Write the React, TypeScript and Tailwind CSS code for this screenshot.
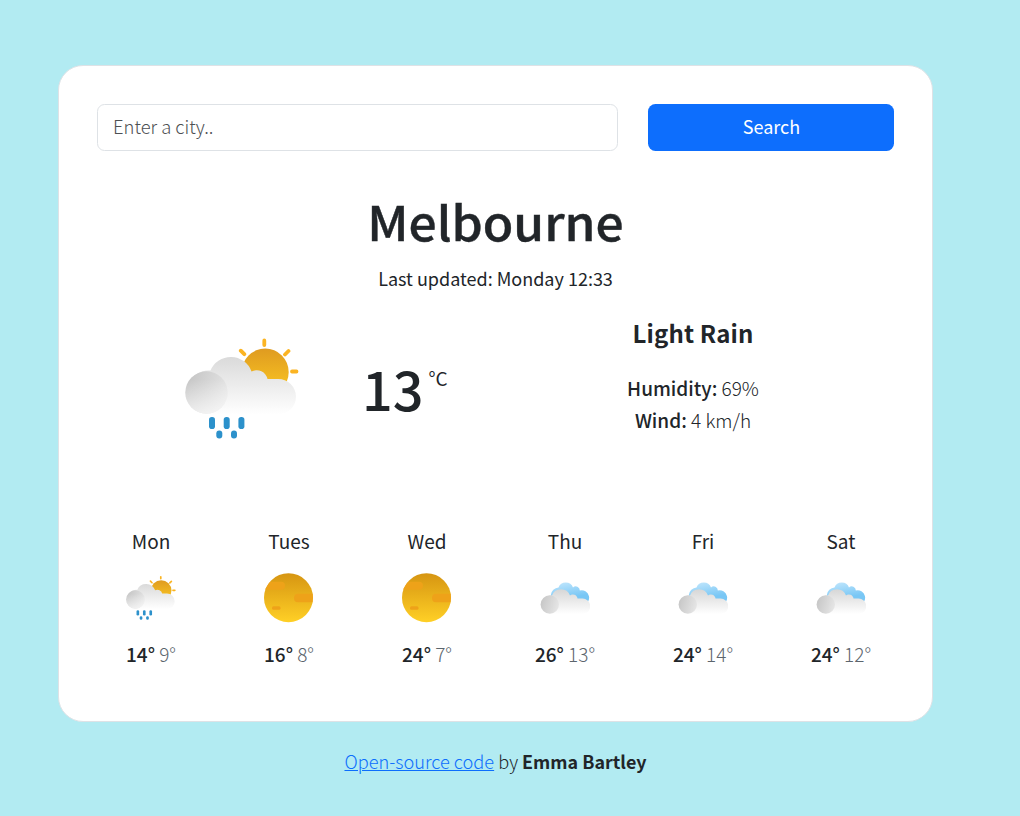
import React from "react";

function RainIcon({ className }: { className: string }) {
  return (
    <svg viewBox="-0.5 -0.5 114 114" className={className}>
      <defs>
        <linearGradient id="sun" x1="0" y1="0" x2="0" y2="1">
          <stop offset="0" stopColor="#df9b20" />
          <stop offset="1" stopColor="#fcc922" />
        </linearGradient>
        <linearGradient id="cloud" x1="0" y1="23" x2="0" y2="82" gradientUnits="userSpaceOnUse">
          <stop offset="0" stopColor="#d9d9d9" />
          <stop offset="1" stopColor="#ffffff" />
        </linearGradient>
        <linearGradient id="puff" x1="0" y1="0.2" x2="1" y2="0.6">
          <stop offset="0" stopColor="#c4c4c4" />
          <stop offset="1" stopColor="#e6e6e6" />
        </linearGradient>
        <linearGradient id="puffFade" x1="0" y1="38" x2="0" y2="82" gradientUnits="userSpaceOnUse">
          <stop offset="0.2" stopColor="#ffffff" stopOpacity="0" />
          <stop offset="1" stopColor="#ffffff" stopOpacity="0.65" />
        </linearGradient>
      </defs>
      <g stroke="#fbb422" strokeWidth="3.8" strokeLinecap="round">
        <path d="M78.800 8v4.500M55.300 18.200l3.500 3.500M103 18.500l-3.500 3.500M106.500 39h4.500" />
      </g>
      <circle cx="79.700" cy="39.500" r="23.500" fill="url(#sun)" />
      <path
        d="M21 82H93A17.500 17.500 0 0 0 92.500 46.500H82A11 11 0 0 0 66 39A22 22 0 0 0 25 38A21.500 21.500 0 0 0 21 82Z"
        fill="url(#cloud)"
      />
      <circle cx="21" cy="60" r="21.200" fill="url(#puff)" />
      <circle cx="21" cy="60" r="21.200" fill="url(#puffFade)" />
      <g fill="#2c91cb">
        <rect x="23.500" y="84.500" width="6" height="12" rx="2.800" />
        <rect x="38.200" y="84.500" width="6" height="12" rx="2.800" />
        <rect x="52.900" y="84.500" width="6" height="12" rx="2.800" />
        <rect x="30.800" y="98" width="6" height="8" rx="2.900" />
        <rect x="45.500" y="98" width="6" height="8" rx="2.900" />
      </g>
    </svg>
  );
}

function SunIcon({ className }: { className: string }) {
  return (
    <svg viewBox="0 0 50 50" className={className}>
      <defs>
        <linearGradient id="disc" x1="0" y1="0" x2="0" y2="1">
          <stop offset="0" stopColor="#d69512" />
          <stop offset="1" stopColor="#ffd026" />
        </linearGradient>
        <clipPath id="discClip">
          <circle cx="24.500" cy="24.700" r="24.500" />
        </clipPath>
      </defs>
      <circle cx="24.500" cy="24.700" r="24.500" fill="url(#disc)" />
      <g fill="#eea219" clipPath="url(#discClip)">
        <rect x="-5" y="8.700" width="26" height="8" rx="4" />
        <rect x="30" y="20.700" width="26" height="8.500" rx="4" />
        <rect x="8" y="33.200" width="8.500" height="3.500" rx="1.500" />
      </g>
    </svg>
  );
}

function CloudIcon({ className }: { className: string }) {
  return (
    <svg viewBox="-0.5 1 50 50" className={className}>
      <defs>
        <linearGradient id="sky" x1="0" y1="0" x2="0.300" y2="1">
          <stop offset="0" stopColor="#c5e8fd" />
          <stop offset="0.750" stopColor="#79c7f5" />
        </linearGradient>
        <linearGradient id="front" x1="0" y1="17" x2="0" y2="42" gradientUnits="userSpaceOnUse">
          <stop offset="0" stopColor="#d6d6d6" />
          <stop offset="1" stopColor="#ffffff" />
        </linearGradient>
        <linearGradient id="ball" x1="0" y1="0.300" x2="1" y2="0.600">
          <stop offset="0" stopColor="#c6c6c6" />
          <stop offset="1" stopColor="#e6e6e6" />
        </linearGradient>
      </defs>
      <path
        d="M16 32A8.500 8.500 0 0 1 18 15.500A7.700 7.700 0 0 1 32.500 15.500A4 4 0 0 1 39.300 18.500A7.400 7.400 0 1 1 43 33Z"
        fill="url(#sky)"
      />
      <path
        d="M9.500 42H42.500A7.600 7.600 0 0 0 41.500 26.500H37A4.700 4.700 0 0 0 29.500 23.500A9.600 9.600 0 0 0 11.500 23.500A9.200 9.200 0 0 0 9.500 42Z"
        fill="url(#front)"
      />
      <circle cx="9.300" cy="32.500" r="9.200" fill="url(#ball)" />
    </svg>
  );
}

const icons = { rain: RainIcon, sun: SunIcon, cloud: CloudIcon };

const forecast: { day: string; icon: keyof typeof icons; high: number; low: number }[] = [
  { day: "Mon", icon: "rain", high: 14, low: 9 },
  { day: "Tues", icon: "sun", high: 16, low: 8 },
  { day: "Wed", icon: "sun", high: 24, low: 7 },
  { day: "Thu", icon: "cloud", high: 26, low: 13 },
  { day: "Fri", icon: "cloud", high: 24, low: 14 },
  { day: "Sat", icon: "cloud", high: 24, low: 12 },
];

export default function App() {
  return (
    <div className="h-[816px] w-[1020px] overflow-hidden bg-[#b2ebf2] pt-[65px] pl-[58px] font-['Noto_Sans_CJK_JP',sans-serif] text-[18px] leading-[30px] font-light text-[#212529]">
      <main className="h-[657px] w-[875px] rounded-[25px] border border-[#dee2e6] bg-white px-[38px] pt-[38px]">
        <form className="flex gap-[30px]" onSubmit={(e) => e.preventDefault()}>
          <input
            type="text"
            placeholder="Enter a city.."
            className="h-[47px] w-[521px] rounded-[7.500px] border border-[#dee2e6] px-[15px] pb-[3px] text-[18.400px] placeholder:text-[#4d5053] placeholder:opacity-100"
          />
          <button className="h-[47px] w-[246px] rounded-[7.500px] bg-[#0d6efd] pb-[3px] pl-px font-normal text-white">Search</button>
        </form>
        <h1 className="mt-[40px] scale-x-[1.058] text-center text-[47px] leading-[60px] font-medium [-webkit-text-stroke:0.4px_#212529]">
          Melbourne
        </h1>
        <p className="mt-[12px] text-center font-normal">Last updated: Monday 12:33</p>
        <section className="mt-[25px] flex h-[184px]">
          <div className="flex w-[399px] pl-[88px]">
            <RainIcon className="mt-[14px] size-[114px]" />
            <div className="ml-[63px] flex pt-[34px]">
              <span className="text-[54px] leading-[72px] font-medium">13</span>
              <span className="ml-[5px] pt-[11px] text-[19px] font-normal">°C</span>
            </div>
          </div>
          <div className="w-[394px] text-center">
            <h2 className="text-[24px] leading-[30px] font-bold tracking-[0.15px]">Light Rain</h2>
            <p className="mt-[24px] text-[19px] leading-[32px]">
              <span className="font-medium">Humidity:</span> 69%
            </p>
            <p className="text-[19px] leading-[32px]">
              <span className="font-medium">Wind:</span> 4 km/h
            </p>
          </div>
        </section>
        <section className="-mr-[16px] -ml-[15px] mt-[24px] grid grid-cols-6 text-[19px]">
          {forecast.map(({ day, icon, high, low }) => {
            const Icon = icons[icon];
            return (
              <div key={day} className="flex flex-col items-center">
                <div className="font-normal">{day}</div>
                <Icon className="mt-[17px] size-[50px]" />
                <div className="mt-[16px] text-[#5c656d]">
                  <span className="font-medium text-[#212529]">{high}°</span> {low}°
                </div>
              </div>
            );
          })}
        </section>
      </main>
      <footer className="mt-[24px] w-[875px] text-center text-[18.200px]">
        <a href="#source" className="text-[#0d6efd] underline">
          Open-source code
        </a>{" "}
        by <strong className="text-[17.900px] font-bold">Emma Bartley</strong>
      </footer>
    </div>
  );
}
